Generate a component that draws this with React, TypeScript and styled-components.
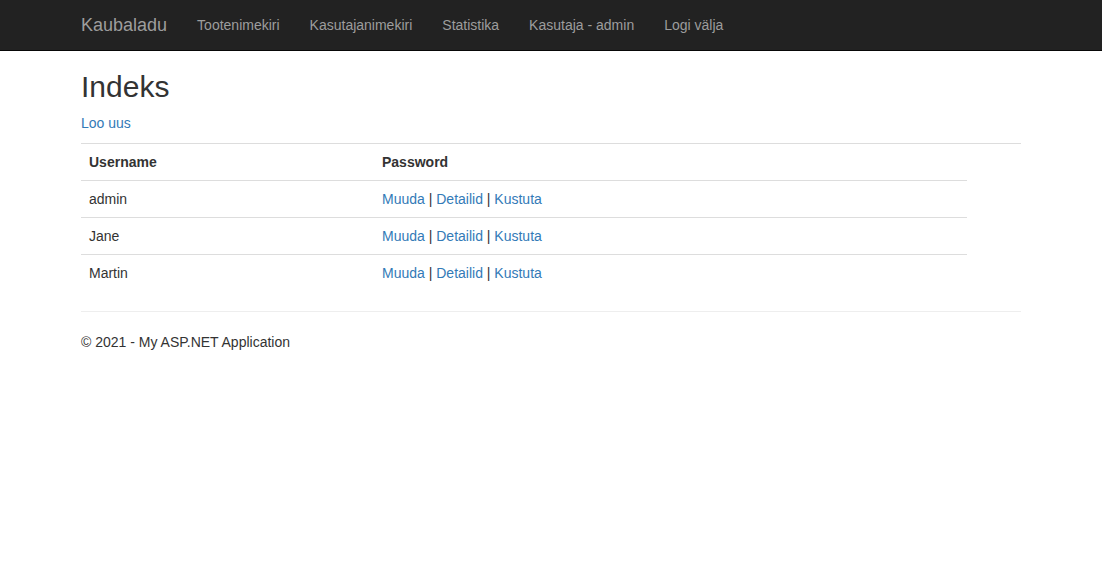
import React from "react";
import styled, { createGlobalStyle } from "styled-components";

const Global = createGlobalStyle`
  html, body { margin: 0; padding: 0; background: #fff; }
  body {
    font-family: "Liberation Sans", Arial, Helvetica, sans-serif;
    font-size: 14px;
    line-height: 20px;
    color: #333;
  }
  * { box-sizing: border-box; }
`;

const Navbar = styled.nav`
  height: 51px;
  background: #222;
  border-bottom: 1px solid #080808;
`;

const Container = styled.div`
  width: 970px;
  margin: 0 auto;
  padding: 0 15px;
`;

const NavInner = styled(Container)`
  display: flex;
  align-items: center;
  height: 50px;
`;

const Brand = styled.a`
  font-size: 18px;
  line-height: 20px;
  color: #9d9d9d;
  padding: 15px 15px 15px 0;
  text-decoration: none;
`;

const NavLink = styled.a`
  font-size: 14px;
  line-height: 20px;
  color: #9d9d9d;
  padding: 15px;
  text-decoration: none;
`;

const Title = styled.h2`
  font-size: 30px;
  font-weight: 500;
  line-height: 33px;
  margin: 19px 0 10px;
`;

const Para = styled.p`
  margin: 0 0 10px;
`;

const Link = styled.a`
  color: #337ab7;
  text-decoration: none;
`;

const Table = styled.table`
  width: 940px;
  border-collapse: collapse;
  border-spacing: 0;
  margin-bottom: 20px;
  table-layout: fixed;
`;

const Th = styled.th<{ $w: number }>`
  width: ${(p) => p.$w}px;
  text-align: left;
  font-weight: bold;
  padding: 8px;
  border-top: 1px solid #ddd;
  vertical-align: top;
`;

const Td = styled.td`
  padding: 8px;
  border-top: 1px solid #ddd;
  vertical-align: top;
`;

const Hr = styled.hr`
  margin: 20px 0;
  border: 0;
  border-top: 1px solid #eee;
  height: 0;
`;

const Footer = styled.footer`
  p { margin: 0 0 10px; }
`;

const users = ["admin", "Jane", "Martin"];

export default function App() {
  return (
    <>
      <Global />
      <Navbar>
        <NavInner>
          <Brand href="#">Kaubaladu</Brand>
          <NavLink href="#">Tootenimekiri</NavLink>
          <NavLink href="#">Kasutajanimekiri</NavLink>
          <NavLink href="#">Statistika</NavLink>
          <NavLink href="#">Kasutaja - admin</NavLink>
          <NavLink href="#">Logi välja</NavLink>
        </NavInner>
      </Navbar>
      <Container>
        <Title>Indeks</Title>
        <Para>
          <Link href="#">Loo uus</Link>
        </Para>
        <Table>
          <tbody>
            <tr>
              <Th $w={293}>Username</Th>
              <Th $w={593}>Password</Th>
              <Th $w={54}></Th>
            </tr>
            {users.map((u) => (
              <tr key={u}>
                <Td>{u}</Td>
                <Td>
                  <Link href="#">Muuda</Link> | <Link href="#">Detailid</Link> |{" "}
                  <Link href="#">Kustuta</Link>
                </Td>
              </tr>
            ))}
          </tbody>
        </Table>
        <Hr />
        <Footer>
          <p>© 2021 - My ASP.NET Application</p>
        </Footer>
      </Container>
    </>
  );
}
